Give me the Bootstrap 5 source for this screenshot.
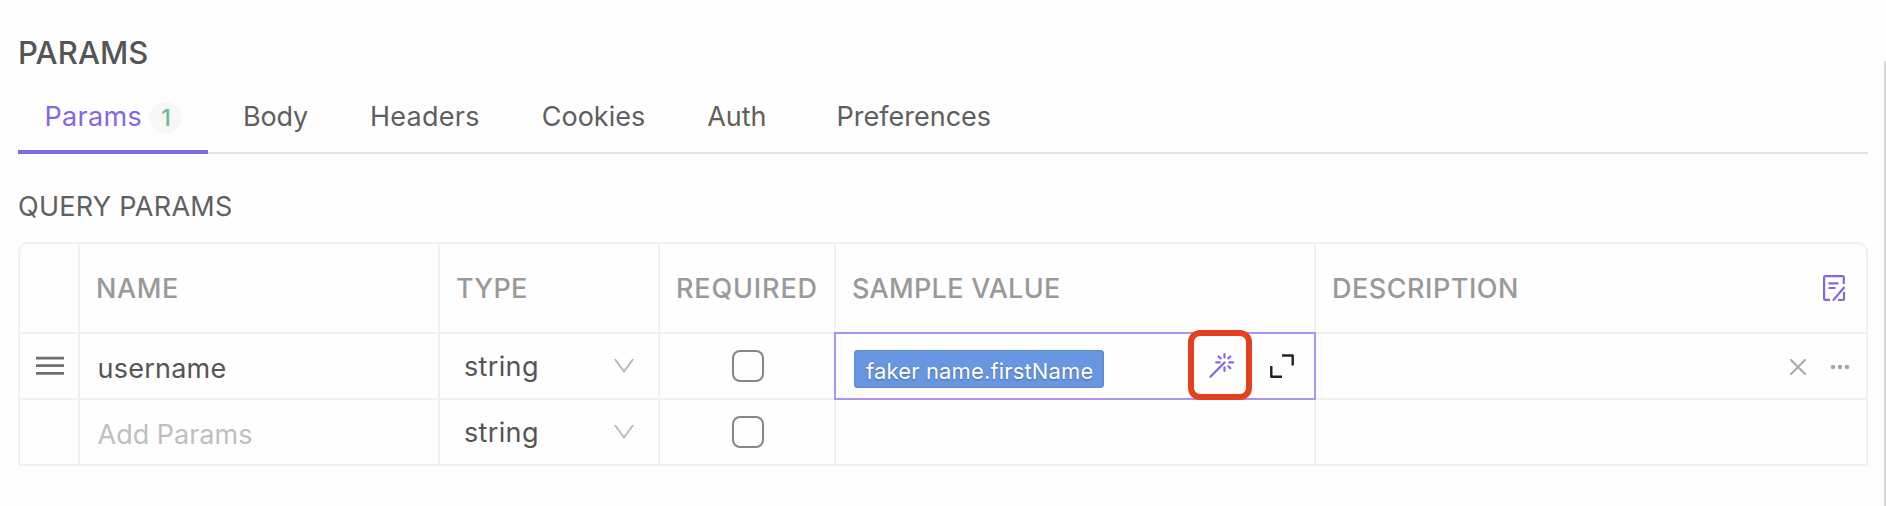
<!DOCTYPE html>
<html lang="en">
<head>
<meta charset="utf-8">
<meta name="viewport" content="width=device-width, initial-scale=1">
<title>Params</title>
<link rel="stylesheet" href="https://cdn.jsdelivr.net/npm/bootstrap@5.3.0/dist/css/bootstrap.min.css">
<script defer src="https://cdn.jsdelivr.net/npm/bootstrap@5.3.0/dist/js/bootstrap.bundle.min.js"></script>
<style>
  :root { --accent: #8069e3; --line: #f1f1f3; --paper: #fefefe; }
  body { background: var(--paper); color: #555; font: 400 27px/40px Inter, sans-serif; height: 506px; overflow: hidden; }
  .page-main { padding: 33px 16px 0 18px; }
  .page-edge { width: 2px; margin-top: 61px; background: #d9d9d9; border-top-left-radius: 2px; }
  .panel-title { font-size: 31px; line-height: 40px; font-weight: 500; color: #555; letter-spacing: .1px; }
  .param-tabs { border-bottom: 2px solid #e4e4e4; }
  .param-tabs .nav-link { color: #5f5f5f; padding: 24px 26px 13px; margin: 0 10px -2px 0; border: 0; border-bottom: 4px solid transparent; border-radius: 0; line-height: 40px; }
  .param-tabs .nav-link.active { color: var(--accent); border-color: var(--accent); background: none; letter-spacing: .3px; padding-left: 26.5px; }
  .param-tabs .nav-item:first-child { margin-right: -1px; }
  .count { width: 32px; height: 32px; margin: 2px 0 0 8px; border-radius: 50%; background: #f7f7f7; color: #5fbf93; font-size: 23px; line-height: 32px; font-weight: 500; letter-spacing: 0; }
  .section-title { margin: 33px 0 15px; letter-spacing: .28px; color: #606060; }
  .param-grid { display: grid; grid-template: 88px 64px 64px / 58px 358px 218px 174px 478px 1fr; gap: 2px; background: var(--line); border: 2px solid var(--line); border-radius: 10px 10px 0 0; }
  .param-grid > div { background: var(--paper); }
  .param-grid > div:first-child { border-top-left-radius: 8px; }
  .param-grid > .head-last { border-top-right-radius: 8px; }
  .head { font-weight: 500; color: #999; padding: 2px 0 0 16px; }
  .field { padding: 6px 0 0 17.5px; }
  .kind { padding: 2px 24px 0 24px; letter-spacing: .35px; }
  .kind svg { margin-top: -2px; }
  .box { width: 32px; height: 32px; border: 2px solid #868686; border-radius: 8px; margin-left: 1px; }
  .active-cell { outline: 2px solid #ab95f0; z-index: 1; padding: 16px 20px 0 18px; }
  .faker-tag { width: 250px; height: 38px; padding: 4px 0 0 12px; border-radius: 4px; background: #6896e1; box-shadow: inset 0 0 1px 1px #5f8ad2; color: #fff; font-size: 22px; line-height: 34px; letter-spacing: .15px; text-shadow: 0 1px 2px rgba(0,0,0,.3); }
  .callout-ring { left: 352px; top: -4px; width: 64px; height: 70px; border: 6px solid #e63f1e; border-radius: 12px; }
  svg { display: block; flex: none; }
</style>
</head>
<body class="d-flex">
<main class="page-main flex-grow-1">
  <h1 class="panel-title mb-0">PARAMS</h1>
  <ul class="nav param-tabs flex-nowrap">
    <li class="nav-item"><a class="nav-link active d-flex align-items-center" href="#">Params<span class="count text-center">1</span></a></li>
    <li class="nav-item"><a class="nav-link" href="#" style="letter-spacing:-.15px">Body</a></li>
    <li class="nav-item"><a class="nav-link" href="#" style="letter-spacing:.25px">Headers</a></li>
    <li class="nav-item"><a class="nav-link" href="#">Cookies</a></li>
    <li class="nav-item me-2"><a class="nav-link" href="#">Auth</a></li>
    <li class="nav-item"><a class="nav-link" href="#">Preferences</a></li>
  </ul>
  <div class="section-title">QUERY PARAMS</div>

  <div class="param-grid">
    <div></div>
    <div class="head d-flex align-items-center" style="letter-spacing:.6px">NAME</div>
    <div class="head d-flex align-items-center" style="letter-spacing:.27px">TYPE</div>
    <div class="head d-flex align-items-center" style="letter-spacing:.84px">REQUIRED</div>
    <div class="head d-flex align-items-center" style="letter-spacing:.29px">SAMPLE VALUE</div>
    <div class="head head-last d-flex align-items-center justify-content-between" style="letter-spacing:.51px">DESCRIPTION
      <svg width="24" height="28" viewBox="0 0 24 28" fill="none" stroke="#8069e3" stroke-width="2.2" style="margin:-2px 20px 0 0"><path d="M21.8 10V3.1a1 1 0 0 0-1-1H3.1a1 1 0 0 0-1 1v21.8a1 1 0 0 0 1 1H8M22 18v7a1 1 0 0 1-1 1h-5M6.500 9.300h10M6.500 14h7M22.500 13 11 26.500"/></svg>
    </div>

    <div class="d-flex align-items-center">
      <svg width="28" height="20" viewBox="0 0 28 20" stroke="#6f6f6f" stroke-width="2.7" style="margin-left:16px"><path d="M0 2.200h28M0 9.700h28M0 17.300h28"/></svg>
    </div>
    <div class="field d-flex align-items-center" style="letter-spacing:.24px">username</div>
    <div class="kind d-flex align-items-center justify-content-between">string
      <svg width="20" height="14" viewBox="0 0 20 14" fill="none" stroke="#b5b5b5" stroke-width="1.900"><path d="M.8 0 10 12.600 19.200 0"/></svg>
    </div>
    <div class="d-flex align-items-center justify-content-center"><span class="box"></span></div>
    <div class="active-cell position-relative d-flex align-items-start">
      <span class="faker-tag text-nowrap">faker name.firstName</span>
      <svg class="ms-auto" width="26" height="26" viewBox="1209 352 26 26" fill="none" stroke="#8069e3" stroke-width="2.200" stroke-linecap="round" style="margin-right:35px;margin-top:2px"><path d="M1210.400 376.800 1224.500 362.500M1224.500 354.200v3.200M1224.500 367.400v3.500M1216.200 362.400h3.400M1229.400 362.400h3.600M1218.700 356.500l1.900 1.900M1230.300 356.500l-1.900 1.900M1228.400 366.300l1.900 1.900"/></svg>
      <svg width="24" height="24" viewBox="0 0 24 24" fill="none" stroke="#222" stroke-width="2.400" stroke-linejoin="round" style="margin-top:4px"><path d="M12 1.500h10.700v10M1.300 12v10.700H12"/></svg>
      <span class="callout-ring position-absolute"></span>
    </div>
    <div class="d-flex align-items-center justify-content-end">
      <svg width="16" height="16" viewBox="0 0 16 16" stroke="#a9a9a9" stroke-width="2" stroke-linecap="round" style="margin:2px 24px 0 0"><path d="M1 1l14 14M15 1 1 15"/></svg>
      <svg width="20" height="6" viewBox="0 0 20 6" fill="#a9a9a9" style="margin:2px 16px 0 0"><circle cx="3" cy="3" r="2.300"/><circle cx="10" cy="3" r="2.300"/><circle cx="17" cy="3" r="2.300"/></svg>
    </div>

    <div></div>
    <div class="field d-flex align-items-center" style="color:#bfbfbf">Add Params</div>
    <div class="kind d-flex align-items-center justify-content-between">string
      <svg width="20" height="14" viewBox="0 0 20 14" fill="none" stroke="#bdbdbd" stroke-width="1.900"><path d="M.8 0 10 12.600 19.200 0"/></svg>
    </div>
    <div class="d-flex align-items-center justify-content-center"><span class="box"></span></div>
    <div></div>
    <div></div>
  </div>
</main>
<div class="page-edge"></div>
</body>
</html>
